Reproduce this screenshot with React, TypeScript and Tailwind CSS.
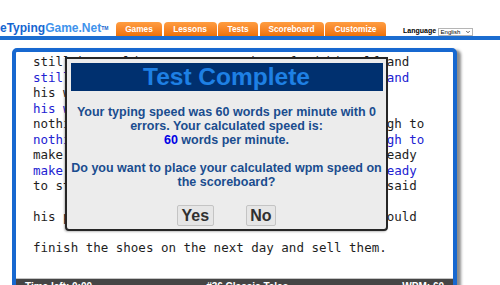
import { ChevronDown } from "lucide-react";

const tabs = [
  { label: "Games", w: "w-[46px]" },
  { label: "Lessons", w: "w-[53px]" },
  { label: "Tests", w: "w-[40px]" },
  { label: "Scoreboard", w: "w-[64px]" },
  { label: "Customize", w: "w-[61px]" },
];

type Row = { text: string; typed?: boolean };

const lines = [
  "still he could not earn enough to feed himself and",
  "his wife. Times were hard and at last he had",
  "nothing left in the world but just leather enough to",
  "make a pair of shoes. He cut the leather out, ready",
];

const rows: Row[] = [
  ...lines.flatMap((l) => [{ text: l }, { text: l, typed: true }]),
  { text: "to stitch up the next morning. Then he lay and said" },
  { text: "", typed: true },
  { text: "his prayers, and hoped that in the morning he could" },
  { text: "" },
  { text: "finish the shoes on the next day and sell them." },
  { text: "" },
];

function Header() {
  return (
    <div>
      <div className="flex items-end h-[36px]">
        <div className="w-[116px] pb-[2px] leading-[12px] text-[12px] font-bold whitespace-nowrap">
          <span className="text-[#1565d0]">eTyping</span>
          <span className="text-[#3f93ec]">Game.Net</span>
          <sup className="text-[5px] text-[#1565d0] relative -top-[2px]">TM</sup>
        </div>
        <div className="flex gap-[1.5px]">
          {tabs.map((t) => (
            <div
              key={t.label}
              className={`${t.w} h-[14.5px] rounded-t-[4px] bg-gradient-to-b from-[#ff9d40] to-[#ef7202] text-white font-bold text-[8.3px] flex items-center justify-center`}
            >
              {t.label}
            </div>
          ))}
        </div>
        <div className="flex items-end ml-[17px] gap-[2px]">
          <span className="text-[7px] font-bold text-black leading-[9px] pb-[1px]">Language</span>
          <div className="h-[8.5px] w-[35px] border border-[#b5b5b5] bg-white flex items-center justify-between px-[1.5px] text-[6px] leading-none text-black">
            <span>English</span>
            <ChevronDown size={6} strokeWidth={2.5} />
          </div>
        </div>
      </div>
      <div className="h-[4px] bg-[#1c6dd0]" />
    </div>
  );
}

function TypingBox() {
  return (
    <div className="ml-[12px] mt-[8px] w-[445px] border-4 border-[#1768d0] rounded-t-[5px] shadow-[4px_2px_3px_rgba(0,0,0,0.45)] bg-white">
      <div className="h-[226px] pt-[2px] pl-[17px] font-['DejaVu_Sans_Mono',monospace] text-[12.5px] leading-[15.5px]">
        {rows.map((r, i) => (
          <div
            key={i}
            className={`whitespace-pre h-[15.5px] ${r.typed ? "text-[#2222d2]" : "text-[#1e1e1e]"}`}
          >
            {r.text || "\u00a0"}
          </div>
        ))}
      </div>
      <div className="border-t border-[#c4c4c4] bg-[#454545] h-[24px] pt-[1px] px-[9px] flex justify-between text-white font-bold text-[10px] leading-[14px]">
        <span>Time left: 0:00</span>
        <span>#36 Classic Tales</span>
        <span>WPM: 60</span>
      </div>
    </div>
  );
}

function Dialog() {
  return (
    <div className="absolute left-[65px] top-[57px] w-[323px] h-[174px] border-2 border-[#262626] rounded-b-[4px] bg-[#ececec] px-[3.5px] pt-[3.5px] shadow-[-1px_1px_2px_rgba(0,0,0,0.25)]">
      <div className="h-[28px] bg-[#00306f] flex items-center justify-center text-[24.5px] font-bold leading-[28px] text-[#1e80e4]">
        Test Complete
      </div>
      <div className="mt-[14px] text-center text-[#1a4d8f] font-bold text-[12.5px] leading-[14.2px]">
        <p>
          Your typing speed was 60 words per minute with 0<br />
          errors. Your calculated speed is:<br />
          <span className="text-[#0000e6]">60</span> words per minute.
        </p>
        <p className="mt-[14px]">
          Do you want to place your calculated wpm speed on<br />
          the scoreboard?
        </p>
      </div>
      <div className="mt-[15px] flex justify-center gap-[32px]">
        <button className="h-[21px] px-[3.5px] border border-[#c4c4c4] bg-[#e6e6e6] rounded-[2px] text-[16px] font-bold text-[#303030] leading-[19px]">
          Yes
        </button>
        <button className="h-[21px] px-[3.5px] border border-[#c4c4c4] bg-[#e6e6e6] rounded-[2px] text-[16px] font-bold text-[#303030] leading-[19px]">
          No
        </button>
      </div>
    </div>
  );
}

export default function App() {
  return (
    <div className="relative w-[500px] h-[285px] overflow-hidden bg-white font-['Liberation_Sans',Arial,sans-serif]">
      <Header />
      <TypingBox />
      <Dialog />
    </div>
  );
}
